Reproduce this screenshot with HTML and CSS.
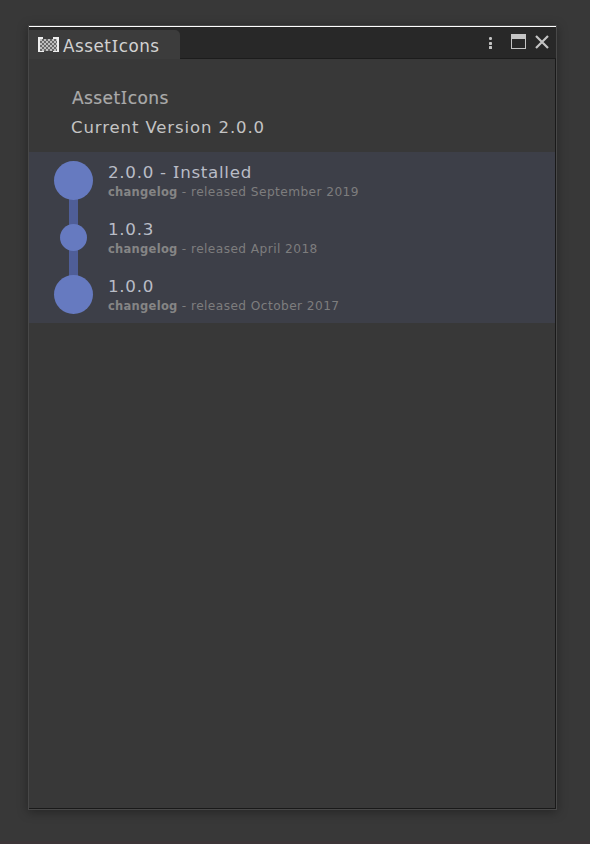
FILE: index.html
```
<!DOCTYPE html>
<html lang="en">
<head>
<meta charset="utf-8">
<title>AssetIcons</title>
<link rel="stylesheet" href="styles.css">
</head>
<body>
<main class="window">
  <header class="bar">
    <div class="tab">
      <svg class="logo" width="21" height="15" viewBox="0 0 21 15" shape-rendering="crispEdges">
        <defs><pattern id="check" width="4" height="4" patternUnits="userSpaceOnUse"><rect width="4" height="4" fill="#686868"/><path d="M0 0h2v2H0zM2 2h2v2H2z" fill="#bdbdbd"/></pattern></defs>
        <rect x="1" y="2" width="19" height="12" fill="url(#check)"/>
        <path d="M0 0h5v2H2v12h4v1H0zM15 0h6v15h-6v-1h4V2h-4z" fill="#eee"/>
      </svg>
      <span class="tab-title">Asset<span class="cap-i">I</span>cons</span>
    </div>
    <div class="controls">
      <svg width="66" height="16" viewBox="0 0 66 16">
        <g fill="#c4c4c4"><rect x="4" y="3" width="3" height="3" rx="1.200"/><rect x="4" y="8" width="3" height="3" rx=".8"/><rect x="4" y="12" width="3" height="3" rx=".5"/>
        <path d="M26 0h15v15H26zM27 5v9h13V5z" fill-rule="evenodd"/></g>
        <path d="M51 2l12 12M63 2l-12 12" stroke="#c4c4c4" stroke-width="2.200"/>
      </svg>
    </div>
  </header>
  <section class="intro">
    <h1>Asset<span class="cap-i">I</span>cons</h1>
    <p>Current Version 2.0.0</p>
  </section>
  <ol class="timeline">
    <li><div class="rail first"><i class="dot big"></i></div><div class="release"><h2>2.0.0 - <span class="cap-i">I</span>nstalled</h2><p><b>changelog</b><span> - released September 2019</span></p></div></li>
    <li><div class="rail"><i class="dot"></i></div><div class="release"><h2>1.0.3</h2><p><b>changelog</b><span> - released April 2018</span></p></div></li>
    <li><div class="rail last"><i class="dot big"></i></div><div class="release"><h2>1.0.0</h2><p><b>changelog</b><span> - released October 2017</span></p></div></li>
  </ol>
</main>
</body>
</html>
```
FILE: styles.css
```
* { box-sizing: border-box; }
body { margin: 0; height: 844px; padding: 25px 0 0 28px; background: #383838; border-bottom: 3px solid #3c3538; font-family: "DejaVu Sans", Verdana, sans-serif; overflow: hidden; }
h1, h2, p, ol { margin: 0; padding: 0; font-weight: 400; }
h1, h2, p { white-space: nowrap; }
.window { width: 529px; height: 785px; border: 1px solid #484848; background: #383838; box-shadow: 0 2px 10px rgba(0,0,0,.35), inset -1px -1px #191919; }
.bar { display: flex; justify-content: space-between; height: 33px; border-top: 1px solid #fff; border-bottom: 1px solid #1c1c1c; background: #282828; }
.tab { display: flex; width: 151px; height: 29px; margin-top: 3px; padding: 7px 0 0 9px; border-radius: 0 5px 0 0; background: #3c3c3c; }
.logo { display: block; flex: none; }
.tab-title { margin: -2px 0 0 4px; font-size: 16.800px; line-height: 22px; letter-spacing: .5px; color: #d2d2d2; white-space: nowrap; }
.cap-i { margin: 0 .5px; font-family: "Noto Sans", sans-serif; font-size: 1.02em; line-height: 1; -webkit-text-stroke: .2px; }
.controls { padding: 7px 5px 0 0; }
.controls svg { display: block; }
.intro { height: 93px; padding: 27px 0 0 42px; }
.intro h1 { margin-left: 1px; font-size: 17px; line-height: 24px; letter-spacing: .4px; color: #aaa; -webkit-text-stroke: .2px; }
.intro p { margin-top: 6px; font-size: 16.500px; line-height: 23px; letter-spacing: .9px; color: #c4c4c4; }
.timeline { width: 526px; height: 171px; background: #3d3f48; list-style: none; }
.timeline li { display: flex; height: 57px; }
.rail { display: flex; width: 39px; margin-left: 25px; align-items: center; justify-content: center; background: linear-gradient(#4f5e98, #4f5e98) center / 9px 100% no-repeat; }
.rail.first { background-size: 9px 50%; background-position: bottom; }
.rail.last { background-size: 9px 50%; background-position: top; }
.dot { width: 27px; height: 27px; border-radius: 50%; background: #667ac0; }
.big { width: 39px; height: 39px; }
.release { margin-left: 15px; padding-top: 9px; }
.release h2 { font-size: 16.700px; line-height: 22px; letter-spacing: .7px; color: #b9bcc6; }
.release p { margin-top: 1px; font-size: 12.200px; line-height: 17px; letter-spacing: .42px; color: #7d7d7e; }
.release b { font-size: 11.500px; letter-spacing: .28px; color: #858585; }
```
